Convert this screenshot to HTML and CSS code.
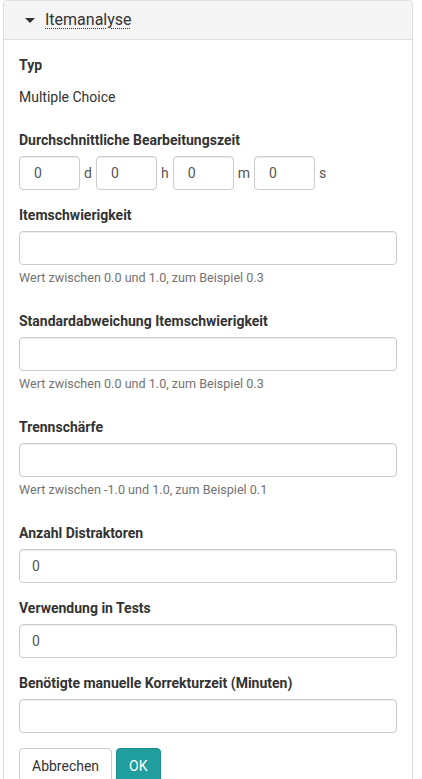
FILE: index.html
```html
<!DOCTYPE html>
<html lang="de">
<head>
<meta charset="utf-8">
<link rel="stylesheet" href="styles.css">
</head>
<body>
<div class="panel">
  <div class="panel-heading">
    <span class="caret"></span>
    <span class="title">Itemanalyse</span>
  </div>
  <div class="panel-body">
    <div class="form-group">
      <label>Typ</label>
      <p class="static">Multiple Choice</p>
    </div>
    <div class="form-group">
      <label>Durchschnittliche Bearbeitungszeit</label>
      <div class="time-row">
        <input class="form-control small" value="0"><span class="unit">d</span>
        <input class="form-control small" value="0"><span class="unit">h</span>
        <input class="form-control small" value="0"><span class="unit">m</span>
        <input class="form-control small" value="0"><span class="unit">s</span>
      </div>
    </div>
    <div class="form-group">
      <label>Itemschwierigkeit</label>
      <input class="form-control" value="">
      <div class="help">Wert zwischen 0.0 und 1.0, zum Beispiel 0.3</div>
    </div>
    <div class="form-group">
      <label>Standardabweichung Itemschwierigkeit</label>
      <input class="form-control" value="">
      <div class="help">Wert zwischen 0.0 und 1.0, zum Beispiel 0.3</div>
    </div>
    <div class="form-group">
      <label>Trennschärfe</label>
      <input class="form-control" value="">
      <div class="help">Wert zwischen -1.0 und 1.0, zum Beispiel 0.1</div>
    </div>
    <div class="form-group">
      <label>Anzahl Distraktoren</label>
      <input class="form-control" value="0">
    </div>
    <div class="form-group">
      <label>Verwendung in Tests</label>
      <input class="form-control" value="0">
    </div>
    <div class="form-group">
      <label>Benötigte manuelle Korrekturzeit (Minuten)</label>
      <input class="form-control" value="">
    </div>
    <div class="buttons">
      <button class="btn btn-default">Abbrechen</button>
      <button class="btn btn-primary">OK</button>
    </div>
  </div>
</div>
</body>
</html>
```
FILE: styles.css
```css
* { box-sizing: border-box; }
html, body { margin: 0; padding: 0; background: #fff; }
body {
  font-family: Roboto, "Liberation Sans", Arial, sans-serif;
  font-size: 14px;
  line-height: 20px;
  color: #333;
}
.panel {
  margin: 0 0 0 3px;
  width: 410px;
  border: 1px solid #ddd;
  border-radius: 4px 4px 0 0;
  border-bottom: none;
}
.panel-heading {
  background: #f5f5f5;
  border-bottom: 1px solid #ddd;
  height: 39px;
  padding: 0 15px 0 21px;
  display: flex;
  align-items: center;
  border-radius: 3px 3px 0 0;
}
.caret {
  width: 0; height: 0;
  border-left: 5px solid transparent;
  border-right: 5px solid transparent;
  border-top: 5px solid #333;
  margin-right: 10px;
  margin-top: 1px;
}
.title {
  font-size: 16px;
  line-height: 20px;
  color: #333;
  text-decoration: underline dotted;
  text-underline-offset: 3px;
  text-decoration-thickness: 1px;
}
.panel-body { padding: 15px 15px 0 15px; }
.form-group { margin-bottom: 15px; }
label {
  display: block;
  font-weight: bold;
  margin-bottom: 6px;
}
.static {
  margin: 0;
  padding: 6px 0 8px;
  height: 34px;
}
.form-control {
  display: block;
  width: 100%;
  height: 34px;
  padding: 6px 12px;
  font-family: inherit;
  font-size: 14px;
  line-height: 20px;
  color: #555;
  background: #fff;
  border: 1px solid #ccc;
  border-radius: 4px;
  box-shadow: inset 0 1px 1px rgba(0,0,0,0.075);
  outline: none;
}
.time-row { display: flex; align-items: center; }
.form-control.small { width: 61px; padding: 6px 14px; flex: none; }
.unit {
  color: #555;
  padding: 0 4px;
}
.help {
  margin-top: 4px;
  padding-bottom: 9px;
  font-size: 12.6px;
  line-height: 18px;
  color: #737373;
}
.buttons { display: flex; gap: 4px; margin-top: 0; }
.btn {
  font-family: inherit;
  font-size: 14px;
  line-height: 20px;
  padding: 7px 12px;
  border-radius: 4px 4px 0 0;
  border: 1px solid #ccc;
  height: 36px;
  cursor: pointer;
}
.btn-default { background: #fff; color: #333; }
.btn-primary { background: #209d9d; border-color: #1d8f8f; color: #fff; padding: 7px 12px; }
```
